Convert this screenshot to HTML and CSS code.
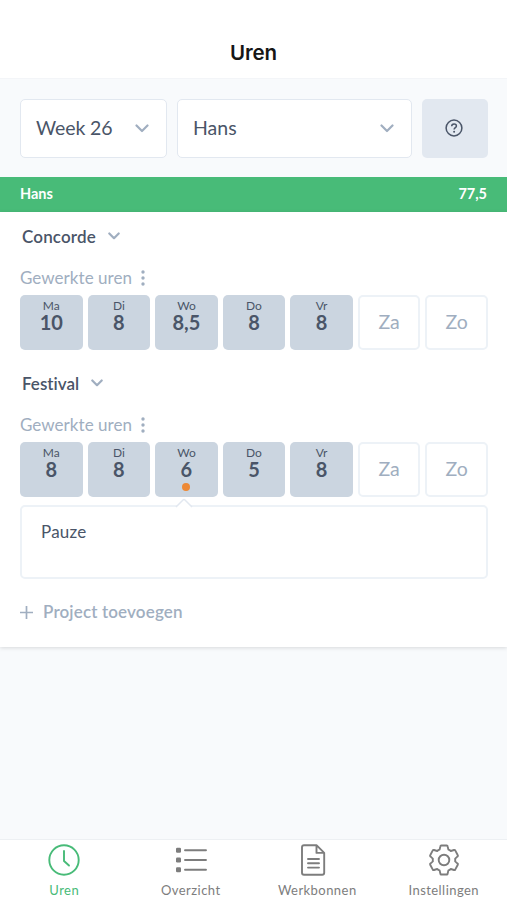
FILE: index.html
```html
<!DOCTYPE html>
<html lang="nl">
<head>
<meta charset="utf-8">
<meta name="viewport" content="width=device-width, initial-scale=1">
<title>Uren</title>
<link rel="stylesheet" href="styles.css">
</head>
<body>
<div class="app">
  <header class="header"><h1 class="title">Uren</h1></header>
  <div class="filters">
    <div class="select week"><span>Week 26</span><svg class="chevron" width="14" height="9" viewBox="0 0 14 9"><path d="M1.500 1.500 7 7l5.500-5.500"/></svg></div>
    <div class="select person"><span>Hans</span><svg class="chevron" width="14" height="9" viewBox="0 0 14 9"><path d="M1.500 1.500 7 7l5.500-5.500"/></svg></div>
    <div class="help"><svg width="18" height="18" viewBox="0 0 18 18"><circle cx="9" cy="9" r="7.900"/><path d="M6.700 7.200c0-1.500 1-2.300 2.400-2.300s2.300.8 2.300 2c0 1.700-2.300 1.700-2.300 3.600"/><circle class="dot" cx="9.100" cy="12.700" r="1"/></svg></div>
  </div>
  <div class="total"><span>Hans</span><span>77,5</span></div>
  <main class="sheet">
    <section class="project">
      <h2 class="project-name"><span class="concorde">Concorde</span><svg class="chevron" width="12" height="8" viewBox="0 0 12 8"><path d="m1.300 1.500 4.700 4.700 4.700-4.700"/></svg></h2>
      <div class="label"><span>Gewerkte uren</span><svg width="4" height="16" viewBox="0 0 4 16"><circle cx="2" cy="2" r="1.700"/><circle cx="2" cy="8" r="1.700"/><circle cx="2" cy="14" r="1.700"/></svg></div>
      <div class="days">
        <div class="day"><small>Ma</small><b>10</b></div>
        <div class="day"><small>Di</small><b>8</b></div>
        <div class="day"><small>Wo</small><b>8,5</b></div>
        <div class="day"><small>Do</small><b>8</b></div>
        <div class="day"><small>Vr</small><b>8</b></div>
        <div class="day empty">Za</div>
        <div class="day empty">Zo</div>
      </div>
    </section>
    <section class="project">
      <h2 class="project-name"><span class="festival">Festival</span><svg class="chevron" width="12" height="8" viewBox="0 0 12 8"><path d="m1.300 1.500 4.700 4.700 4.700-4.700"/></svg></h2>
      <div class="label"><span>Gewerkte uren</span><svg width="4" height="16" viewBox="0 0 4 16"><circle cx="2" cy="2" r="1.700"/><circle cx="2" cy="8" r="1.700"/><circle cx="2" cy="14" r="1.700"/></svg></div>
      <div class="days">
        <div class="day"><small>Ma</small><b>8</b></div>
        <div class="day"><small>Di</small><b>8</b></div>
        <div class="day"><small>Wo</small><b>6</b><i class="marker"></i></div>
        <div class="day"><small>Do</small><b>5</b></div>
        <div class="day"><small>Vr</small><b>8</b></div>
        <div class="day empty">Za</div>
        <div class="day empty">Zo</div>
      </div>
      <div class="note"><svg class="pointer" width="18" height="10" viewBox="0 0 18 10"><path d="M1 9 8 2q1-1 2 0L17 9"/></svg><span>Pauze</span></div>
    </section>
    <div class="add"><svg width="13" height="13" viewBox="0 0 13 13"><path d="M6.500 0v13M0 6.500h13"/></svg><span>Project toevoegen</span></div>
  </main>
  <nav class="tabs">
    <div class="tab active"><svg width="32" height="32" viewBox="0 0 32 32"><circle cx="16" cy="16" r="14.700"/><path d="M16 7v10l5 4.500"/></svg><span class="t1">Uren</span></div>
    <div class="tab"><svg width="32" height="32" viewBox="0 0 32 32"><path d="M10 6.200h21M10 16h21M10 25.800h21"/><g class="solid"><rect x="1" y="3.700" width="5" height="5" rx="1.200"/><rect x="1" y="13.500" width="5" height="5" rx="1.200"/><rect x="1" y="23.300" width="5" height="5" rx="1.200"/></g></svg><span class="t2">Overzicht</span></div>
    <div class="tab"><svg class="doc" width="32" height="32" viewBox="0 0 32 32"><path d="M7 1.200h11.500l7.700 7.700v19.900q0 2-2 2H6q-2 0-2-2V3.200q0-2 2-2ZM18.500 1.200v7.700h7.700M10 15h11M10 19.300h11M10 23.600h11"/></svg><span class="t3">Werkbonnen</span></div>
    <div class="tab"><svg width="32" height="32" viewBox="0 0 32 32"><path d="M13.200 1.500h5.600q.7 0 .8.700l.8 3.400q1.300.3 2.400 1.400l3.200-1q.8-.2 1.200.4l2.600 4.800q.4.700-.2 1.200l-2.400 2.200v2.800l2.400 2.200q.6.500.2 1.200l-2.600 4.800q-.4.600-1.200.4l-3.200-1q-1.100 1.100-2.400 1.400l-.8 3.400q-.1.700-.8.700h-5.600q-.7 0-.8-.7l-.8-3.400q-1.300-.3-2.400-1.400l-3.200 1q-.8.200-1.200-.4l-2.600-4.800q-.4-.7.200-1.200l2.400-2.200v-2.800l-2.400-2.200q-.6-.5-.2-1.200l2.600-4.800q.4-.6 1.200-.4l3.200 1q1.100-1.100 2.400-1.400l.8-3.400q.1-.7.800-.7Z"/><circle cx="16" cy="16" r="5.300"/></svg><span class="t4">Instellingen</span></div>
  </nav>
</div>
</body>
</html>
```
FILE: styles.css
```css
* { box-sizing: border-box; }
body { margin: 0; font-family: Lato, "Liberation Sans", sans-serif; font-variant-ligatures: none; color: #4a5568; }
svg { display: block; flex: none; fill: none; stroke: currentColor; }
.app { height: 900px; display: flex; flex-direction: column; background: #f8fafc; overflow: hidden; }
.header { height: 78px; padding-top: 27px; background: #fff; text-align: center; }
.title { margin: 0; font: 600 20.500px/52px Inter, sans-serif; color: #161616; letter-spacing: -.1px; }
.filters { height: 99px; padding: 20px 19px 0 20px; display: flex; gap: 10px; border-top: 1px solid #f3f5f8; }
.select { height: 59px; padding: 0 17px 1px 15px; border: 1px solid #e2e8f0; border-radius: 5px; background: #fff; display: flex; align-items: center; justify-content: space-between; font-size: 19.500px; }
.select span { margin-top: -1px; }
.week { width: 147px; }
.week span { letter-spacing: -.1px; }
.person { width: 235px; }
.chevron { color: #a0aec0; stroke-width: 2.200; stroke-linecap: round; stroke-linejoin: round; }
.help { width: 66px; height: 59px; padding: 0 2px 2px 0; border-radius: 5px; background: #e2e8f0; display: flex; align-items: center; justify-content: center; }
.help svg { stroke-width: 1.500; }
.help .dot { fill: currentColor; stroke: none; }
.total { height: 35px; padding: 0 20px 2px; background: #48bb78; color: #fff; display: flex; align-items: center; justify-content: space-between; font-size: 14.500px; font-weight: 700; }
.sheet { height: 435px; padding: 8px 19px 0 20px; background: #fff; box-shadow: 0 1px 4px #0002; }
.project { height: 147px; }
.project + .project { height: 223px; }
.project-name { height: 32px; margin: 0; padding-left: 2px; display: flex; align-items: center; gap: 12px; font-size: 17px; font-weight: 600; letter-spacing: .15px; }
.project-name .festival { letter-spacing: 0; }
.label { height: 43px; padding: 15px 0 6px; display: flex; align-items: center; gap: 9px; color: #a0aec0; font-size: 17px; line-height: 22px; letter-spacing: .05px; }
.label svg { fill: currentColor; stroke: none; }
.days { display: grid; grid-template-columns: repeat(7, 1fr); gap: 5px; height: 55px; }
.day { padding-top: 3px; border-radius: 5px; background: #cbd5e0; display: flex; flex-direction: column; align-items: center; }
.day small { font-size: 12px; line-height: 16px; }
.day b { font-size: 20px; line-height: 16px; font-weight: 700; }
.day.empty { padding: 0 0 2px; justify-content: center; background: #fff; border: 2px solid #edf2f7; color: #a0aec0; font-size: 19.500px; line-height: 24px; }
.marker { width: 8px; height: 8px; margin-top: 6px; border-radius: 50%; background: #ed8936; }
.note { position: relative; height: 74px; margin-top: 8px; padding: 14px 19px; border: 2px solid #edf2f7; border-radius: 5px; font-size: 17px; line-height: 22px; letter-spacing: .2px; }
.pointer { position: absolute; left: 153px; top: -9px; color: #e2e8f0; fill: #fff; stroke-width: 1.500; }
.add { height: 44px; display: flex; align-items: center; gap: 10px; color: #a0aec0; font-size: 17px; font-weight: 600; letter-spacing: .15px; }
.add svg { stroke-width: 1.700; }
.add span { margin-top: -2px; }
.tabs { margin-top: auto; height: 61px; padding: 4px 0 0 1px; background: #fff; border-top: 1px solid #edf0f3; display: grid; grid-template-columns: repeat(4, 1fr); color: #7d7d7d; }
.tab { display: flex; flex-direction: column; align-items: center; gap: 5px; font-size: 13px; line-height: 18px; letter-spacing: .45px; }
.tab svg { stroke-width: 1.900; stroke-linejoin: round; stroke-linecap: round; }
.tab .doc { margin-right: 6px; }
.active { color: #48bb78; }
.tab .solid { fill: currentColor; stroke: none; }
```
